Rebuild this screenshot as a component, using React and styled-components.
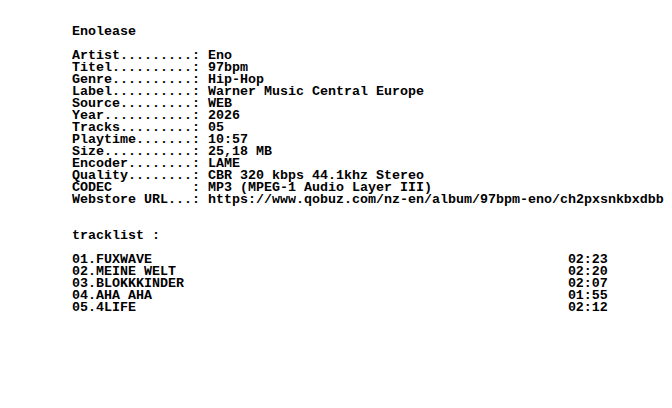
import React from 'react';
import styled, { createGlobalStyle } from 'styled-components';

const GlobalStyle = createGlobalStyle`
  html, body {
    margin: 0;
    padding: 0;
    background: #ffffff;
  }
`;

const Page = styled.div`
  width: 672px;
  height: 408px;
  box-sizing: border-box;
  padding: 26px 0 0 72px;
  background: #ffffff;
  color: #000000;
  font-family: 'Liberation Mono', 'DejaVu Sans Mono', monospace;
  font-weight: bold;
  font-size: 13.333px;
  line-height: 12px;
  overflow: hidden;
`;

const Line = styled.div`
  height: 12px;
  white-space: pre;
`;

const Section = styled.div`
  display: flex;
  flex-direction: column;
  margin-top: ${(props) => props.gap || 0}px;
`;

const InfoRow = styled.div`
  display: grid;
  grid-template-columns: 17ch auto;
  height: 12px;
  white-space: pre;
`;

const TrackRow = styled.div`
  display: grid;
  grid-template-columns: 62ch auto;
  height: 12px;
  white-space: pre;
`;

const info = [
  ['Artist.........:', 'Eno'],
  ['Titel..........:', '97bpm'],
  ['Genre..........:', 'Hip-Hop'],
  ['Label..........:', 'Warner Music Central Europe'],
  ['Source.........:', 'WEB'],
  ['Year...........:', '2026'],
  ['Tracks.........:', '05'],
  ['Playtime.......:', '10:57'],
  ['Size...........:', '25,18 MB'],
  ['Encoder........:', 'LAME'],
  ['Quality........:', 'CBR 320 kbps 44.1khz Stereo'],
  ['CODEC          :', 'MP3 (MPEG-1 Audio Layer III)'],
  ['Webstore URL...:', 'https://www.qobuz.com/nz-en/album/97bpm-eno/ch2pxsnkbxdbb'],
];

const tracks = [
  ['01.FUXWAVE', '02:23'],
  ['02.MEINE WELT', '02:20'],
  ['03.BLOKKKINDER', '02:07'],
  ['04.AHA AHA', '01:55'],
  ['05.4LIFE', '02:12'],
];

export default function App() {
  return (
    <>
      <GlobalStyle />
      <Page>
        <Line>Enolease</Line>
        <Section gap={12}>
          {info.map(([label, value]) => (
            <InfoRow key={label}>
              <span>{label}</span>
              <span>{value}</span>
            </InfoRow>
          ))}
        </Section>
        <Section gap={24}>
          <Line>tracklist :</Line>
        </Section>
        <Section gap={12}>
          {tracks.map(([name, time]) => (
            <TrackRow key={name}>
              <span>{name}</span>
              <span>{time}</span>
            </TrackRow>
          ))}
        </Section>
      </Page>
    </>
  );
}
